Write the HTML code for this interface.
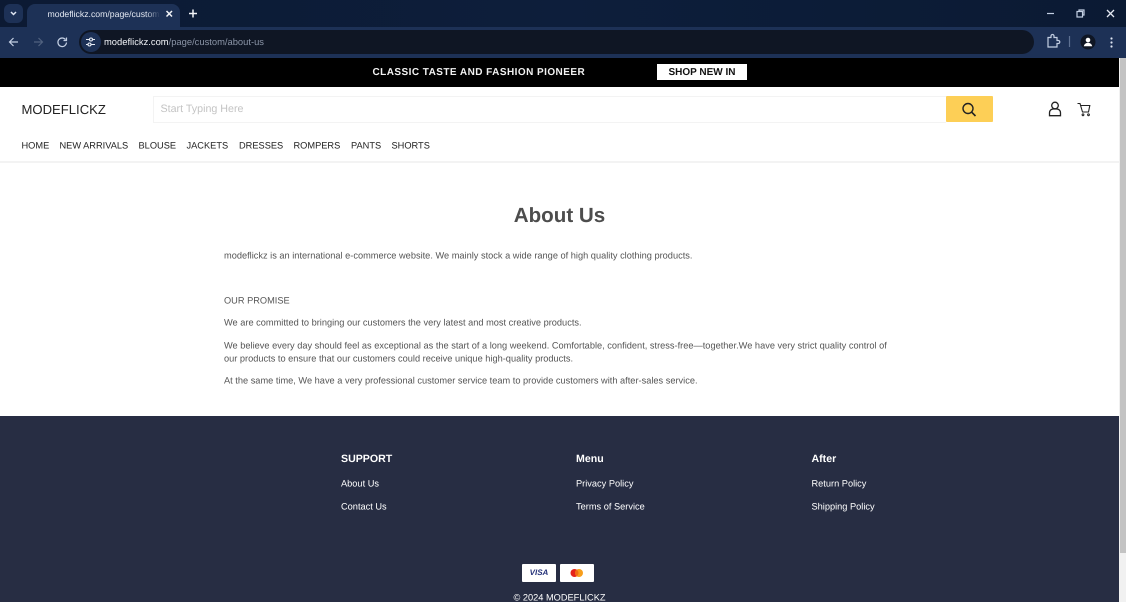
<!DOCTYPE html>
<html>
<head>
<meta charset="utf-8">
<style>
html,body{margin:0;padding:0;width:1126px;height:602px;overflow:hidden;background:#fff;font-family:"Liberation Sans",sans-serif;text-rendering:geometricPrecision}
#w{position:absolute;left:0;top:0;width:1126px;height:602px;overflow:hidden;filter:blur(.3px)}
.a{position:absolute;white-space:nowrap}
.t{transform:translateY(-.5px)}
svg{position:absolute;overflow:visible}
</style>
</head>
<body>
<div id="w">
<div class="a" style="left:0;top:0;width:1126px;height:27px;background:linear-gradient(90deg,#0c1a33,#0d1e3b 50%,#0b1a33)"></div>
<div class="a" style="left:0;top:27px;width:1126px;height:31px;background:#1d3156"></div>
<div class="a" style="left:27px;top:4px;width:153px;height:24px;background:#1d3156;border-radius:8px 8px 0 0"></div>
<div class="a" style="left:4px;top:4px;width:19px;height:19px;background:#1d3156;border-radius:6px"></div>
<svg style="left:0;top:0" width="1126" height="58" fill="none" stroke="#c3cfe3" stroke-width="1.200">
<path d="M11 12l2.500 2.500L16 12" stroke-width="1.500" stroke="#dfe6f2"/>
<path d="M166.500 11l5.500 5.500M172 11l-5.500 5.500" stroke-width="1.500" stroke="#f2f4f8"/>
<path d="M193 9.500v8M189 13.500h8" stroke-width="1.500" stroke="#f2f4f8"/>
<path d="M1047 13.500h7"/>
<rect x="1077" y="11.500" width="5.500" height="5.500"/>
<path d="M1079 11.500v-1.500h5v5h-1.500"/>
<path d="M1107 10l7 7M1114 10l-7 7" stroke-width="1.300" stroke="#e4e9f2"/>
<path d="M18 42h-8M13.500 38l-4 4 4 4"/>
<path d="M42 42h-8M38.500 38l4 4-4 4" stroke="#51627f"/>
<path d="M65.500 39.500a4.300 4.300 0 1 0 1 3M66.500 37.500v3h-3"/>
<path d="M1016 38.500l3.500-.4 1-3 1.500 3 3.500.4-2.500 2.500.7 3.500-2.700-1.700-3 1.700.8-3.500z" stroke-width="1.100" stroke="#dfe6f2"/>
<path d="M1048 38h3v-1.500a1.500 1.500 0 0 1 3 0V38h3v3h1.300a1.500 1.500 0 0 1 0 3H1057v3.500h-9z" transform="translate(0,-.5)"/>
<path d="M1069.500 36v11" stroke="#5e7192"/>
</svg>
<div class="a" style="left:79px;top:30px;width:955px;height:24px;background:#0f1624;border-radius:12px"></div>
<div class="a" style="left:81px;top:32px;width:20px;height:20px;background:#1d3156;border-radius:50%"></div>
<svg style="left:0;top:0" width="1126" height="58" fill="none" stroke="#e8edf5" stroke-width="1.100">
<path d="M86 39.500h3M92.500 39.500h2.500M86 44.500h2M91.500 44.500h3.500"/>
<circle cx="91" cy="39.500" r="1.500"/><circle cx="89.500" cy="44.500" r="1.500"/>
</svg>
<svg style="left:0;top:0" width="1126" height="58">
<circle cx="1088" cy="42" r="7.500" fill="#0f1624"/>
<circle cx="1088" cy="40" r="2.300" fill="#fff"/>
<path d="M1083.800 46.300c.6-2.500 2.400-3.500 4.200-3.500s3.600 1 4.200 3.500z" fill="#fff"/>
<circle cx="1111.500" cy="38.500" r="1.100" fill="#dfe6f2"/><circle cx="1111.500" cy="42.500" r="1.100" fill="#dfe6f2"/><circle cx="1111.500" cy="46.500" r="1.100" fill="#dfe6f2"/>
</svg>
<div class="a" style="left:47.500px;top:8px;font-size:8.700px;line-height:13px;color:#e4e9f2;width:112px;overflow:hidden;-webkit-mask-image:linear-gradient(90deg,#000 88%,transparent 100%)">modeflickz.com/page/custom/about-us</div>
<div class="a" style="left:104px;top:35px;font-size:9.400px;line-height:14px;color:#8a94a6"><span style="color:#f2f4f8">modeflickz.com</span>/page/custom/about-us</div>

<div class="a" style="left:0;top:58px;width:1119px;height:29px;background:#000"></div>
<div class="a" style="left:372.500px;top:65px;font-size:10px;line-height:15px;font-weight:bold;color:#f2f2f2;letter-spacing:.45px">CLASSIC TASTE AND FASHION PIONEER</div>
<div class="a" style="left:657px;top:64px;width:90px;height:16px;background:#fff;color:#111;font-size:10px;line-height:17px;font-weight:bold;text-align:center">SHOP NEW IN</div>

<div class="a" style="left:1119px;top:58px;width:7px;height:544px;background:#f1f1f1"></div>
<div class="a" style="left:1120px;top:58px;width:6px;height:495px;background:#c3c3c3"></div>

<div class="a" style="left:21.500px;top:101px;font-size:13.100px;line-height:17px;color:#222">MODEFLICKZ</div>
<div class="a" style="left:153px;top:96px;width:792px;height:25px;border:1px solid #f3f3f3;border-right:0"></div>
<div class="a" style="left:160.500px;top:102px;font-size:10.700px;line-height:14px;color:#c4c4c4">Start Typing Here</div>
<div class="a" style="left:946px;top:96px;width:47px;height:26px;background:#fdcf56;border-radius:1px"></div>
<svg style="left:0;top:0" width="1119" height="130" fill="none" stroke="#222" stroke-width="1.400">
<circle cx="968" cy="108.500" r="5"/><path d="M971.700 112.200l3.800 3.800" stroke-width="1.600"/>
<circle cx="1055" cy="105.500" r="3.300" stroke-width="1.300"/>
<path d="M1049.500 115.700v-3c0-2.300 1.800-3.700 3.800-3.700h3.400c2 0 3.800 1.400 3.800 3.700v3z" stroke-width="1.300"/>
<path d="M1077.500 103.500h2.500l2.500 8.500h6l1.300-6.500h-9" stroke-width="1.100"/>
<circle cx="1083" cy="114.800" r=".9" stroke-width="1"/><circle cx="1088.500" cy="114.800" r=".9" stroke-width="1"/>
</svg>

<div class="a t" style="top:140px;left:0;font-size:9.250px;line-height:13px;color:#222">
<span class="a" style="left:21.500px">HOME</span>
<span class="a" style="left:59.500px">NEW ARRIVALS</span>
<span class="a" style="left:138.500px">BLOUSE</span>
<span class="a" style="left:186.500px">JACKETS</span>
<span class="a" style="left:239px">DRESSES</span>
<span class="a" style="left:293.500px">ROMPERS</span>
<span class="a" style="left:351px">PANTS</span>
<span class="a" style="left:391.500px">SHORTS</span>
</div>
<div class="a" style="left:0;top:161px;width:1119px;height:2px;background:#f3f3f3"></div>

<div class="a" style="left:0;top:202px;width:1119px;text-align:center;font-size:20.600px;line-height:27px;font-weight:bold;color:#4d4d4d">About Us</div>
<div class="a t" style="left:224px;top:250px;font-size:9.240px;line-height:13px;color:#555">modeflickz is an international e-commerce website. We mainly stock a wide range of high quality clothing products.</div>
<div class="a t" style="left:224px;top:295px;font-size:9.240px;line-height:13px;color:#555">OUR PROMISE</div>
<div class="a t" style="left:224px;top:317px;font-size:9.240px;line-height:13px;color:#555">We are committed to bringing our customers the very latest and most creative products.</div>
<div class="a t" style="left:224px;top:340px;font-size:9.240px;line-height:13px;color:#555">We believe every day should feel as exceptional as the start of a long weekend. Comfortable, confident, stress-free—together.We have very strict quality control of</div>
<div class="a t" style="left:224px;top:353px;font-size:9.240px;line-height:13px;color:#555">our products to ensure that our customers could receive unique high-quality products.</div>
<div class="a t" style="left:224px;top:375px;font-size:9.240px;line-height:13px;color:#555">At the same time, We have a very professional customer service team to provide customers with after-sales service.</div>

<div class="a" style="left:0;top:416px;width:1119px;height:186px;background:#272d43"></div>
<div class="a" style="left:341px;top:452px;font-size:10.600px;line-height:14px;font-weight:bold;color:#fff">SUPPORT</div>
<div class="a" style="left:576px;top:452px;font-size:10.600px;line-height:14px;font-weight:bold;color:#fff">Menu</div>
<div class="a" style="left:811.500px;top:452px;font-size:10.600px;line-height:14px;font-weight:bold;color:#fff">After</div>
<div class="a t" style="left:341px;top:478px;font-size:9.240px;line-height:13px;color:#fff">About Us</div>
<div class="a t" style="left:341px;top:501px;font-size:9.240px;line-height:13px;color:#fff">Contact Us</div>
<div class="a t" style="left:576px;top:478px;font-size:9.240px;line-height:13px;color:#fff">Privacy Policy</div>
<div class="a t" style="left:576px;top:501px;font-size:9.240px;line-height:13px;color:#fff">Terms of Service</div>
<div class="a t" style="left:811.500px;top:478px;font-size:9.240px;line-height:13px;color:#fff">Return Policy</div>
<div class="a t" style="left:811.500px;top:501px;font-size:9.240px;line-height:13px;color:#fff">Shipping Policy</div>

<div class="a" style="left:522px;top:564px;width:34px;height:18px;background:#fff;border-radius:1px;text-align:center;font-size:8px;line-height:18px;font-weight:bold;font-style:italic;color:#26337a">VISA</div>
<div class="a" style="left:560px;top:564px;width:34px;height:18px;background:#fff;border-radius:1px"></div>
<svg style="left:0;top:0" width="1119" height="602">
<circle cx="574.500" cy="573" r="4" fill="#e5231b"/>
<circle cx="579" cy="573" r="4" fill="#f79e1b"/>
<path d="M576.750 569.700a4 4 0 0 1 0 6.600a4 4 0 0 1 0-6.600z" fill="#f26a14"/>
</svg>
<div class="a t" style="left:0;top:592px;width:1119px;text-align:center;font-size:9.240px;line-height:13px;color:#fff">© 2024 MODEFLICKZ</div>
</div>
</body>
</html>
